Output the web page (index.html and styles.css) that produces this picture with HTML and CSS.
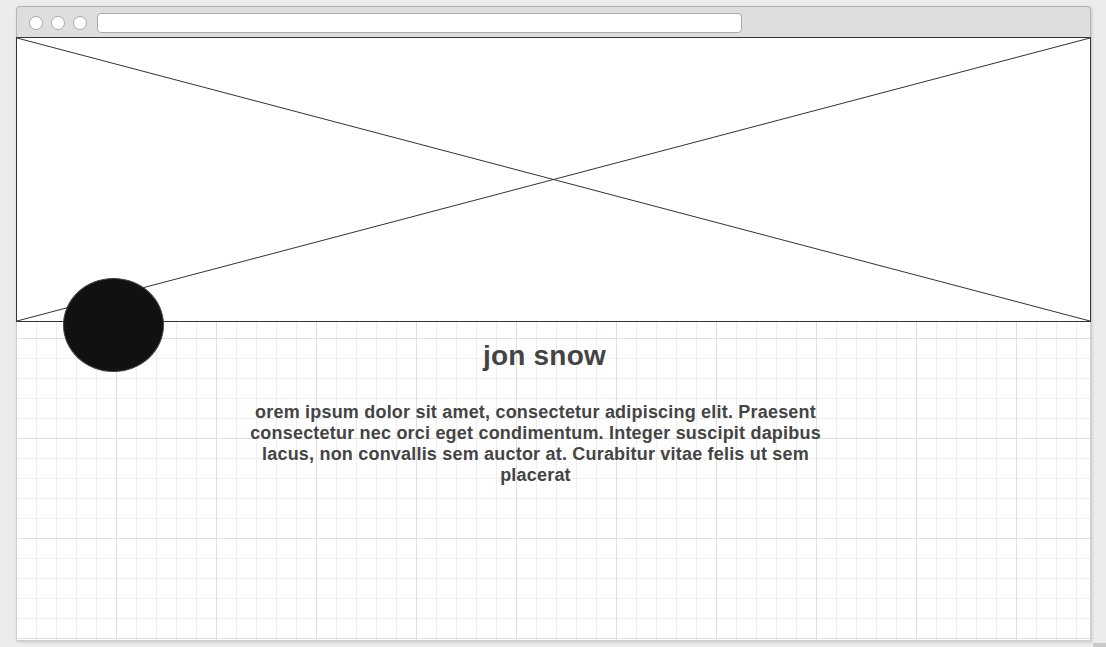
FILE: index.html
```html
<!DOCTYPE html>
<html lang="en">
<head>
<meta charset="utf-8">
<title>Profile wireframe</title>
<link rel="stylesheet" href="styles.css">
</head>
<body>
<div class="page">
  <div class="window">
    <div class="titlebar">
      <span class="dot"></span>
      <span class="dot"></span>
      <span class="dot"></span>
      <div class="urlbar"></div>
    </div>
    <div class="content">
      <div class="hero">
        <svg class="hero-x" viewBox="0 0 100 100" preserveAspectRatio="none">
          <line x1="0" y1="0" x2="100" y2="100" vector-effect="non-scaling-stroke"/>
          <line x1="100" y1="0" x2="0" y2="100" vector-effect="non-scaling-stroke"/>
        </svg>
      </div>
      <div class="avatar"></div>
      <div class="profile">
        <h1 class="name">jon snow</h1>
        <div class="bio-row">
          <p class="bio">orem ipsum dolor sit amet, consectetur adipiscing elit. Praesent consectetur nec orci eget condimentum. Integer suscipit dapibus lacus, non convallis sem auctor at. Curabitur vitae felis ut sem placerat</p>
        </div>
      </div>
    </div>
  </div>
  <div class="resize-grip"></div>
</div>
</body>
</html>
```

FILE: styles.css
```css
html, body {
  margin: 0;
  padding: 0;
}

body {
  background: #ececec;
  font-family: "Liberation Sans", Arial, sans-serif;
  color: #444;
  overflow: hidden;
}

.page {
  position: relative;
  padding: 6px 0 0 16px;
  height: 641px;
}

.window {
  width: 1075px;
  box-shadow: 1px 1px 3px rgba(0, 0, 0, 0.18);
  border-radius: 4px 4px 0 0;
}

.titlebar {
  height: 28px;
  padding-top: 2px;
  background: #dedede;
  border: 1px solid #b4b4b4;
  border-bottom: none;
  border-radius: 4px 4px 0 0;
  display: flex;
  align-items: center;
  padding-left: 12px;
  gap: 8px;
}

.dot {
  width: 14px;
  height: 14px;
  box-sizing: border-box;
  border-radius: 50%;
  background: #fff;
  border: 1px solid #aaa;
  flex: none;
}

.urlbar {
  margin-left: 2px;
  width: 645px;
  height: 20px;
  box-sizing: border-box;
  background: #fff;
  border: 1px solid #aaa;
  border-radius: 4px;
}

.content {
  position: relative;
  height: 603px;
  border-left: 1px solid #cfcfcf;
  border-right: 1px solid #cfcfcf;
  border-bottom: 1px solid #cfcfcf;
  background-color: #fff;
  background-image:
    linear-gradient(to right, #e0e0e0 1px, transparent 1px),
    linear-gradient(to bottom, #e0e0e0 1px, transparent 1px),
    linear-gradient(to right, #eeeeee 1px, transparent 1px),
    linear-gradient(to bottom, #eeeeee 1px, transparent 1px);
  background-size: 100px 100px, 100px 100px, 20px 20px, 20px 20px;
  background-position: 99px 1px, 99px 1px, 19px 1px, 19px 1px;
}

.hero {
  height: 283px;
  margin: 0 -1px;
  border: 1px solid #333;
  background: #fff;
}

.hero-x {
  display: block;
  width: 100%;
  height: 100%;
}

.hero-x line {
  stroke: #333;
  stroke-width: 1;
}

.avatar {
  position: absolute;
  left: 46px;
  top: 241px;
  width: 101px;
  height: 94px;
  box-sizing: border-box;
  border-radius: 50%;
  background: #111;
  border: 1px solid #444;
}

.profile {
  display: flex;
  flex-direction: column;
}

.name {
  margin: 18px 0 0;
  padding-right: 18px;
  text-align: center;
  font-size: 28px;
  font-weight: bold;
  line-height: 32px;
  letter-spacing: 0.2px;
  color: #444;
}

.bio-row {
  display: flex;
  justify-content: center;
  padding-right: 36px;
  margin-top: 30px;
}

.bio {
  margin: 0;
  width: 592px;
  text-align: center;
  font-size: 18px;
  font-weight: bold;
  line-height: 21px;
  letter-spacing: 0.2px;
  color: #444;
}

.resize-grip {
  position: absolute;
  right: 0;
  top: 643px;
  width: 13px;
  height: 4px;
  background: #c8c8c8;
}
```
